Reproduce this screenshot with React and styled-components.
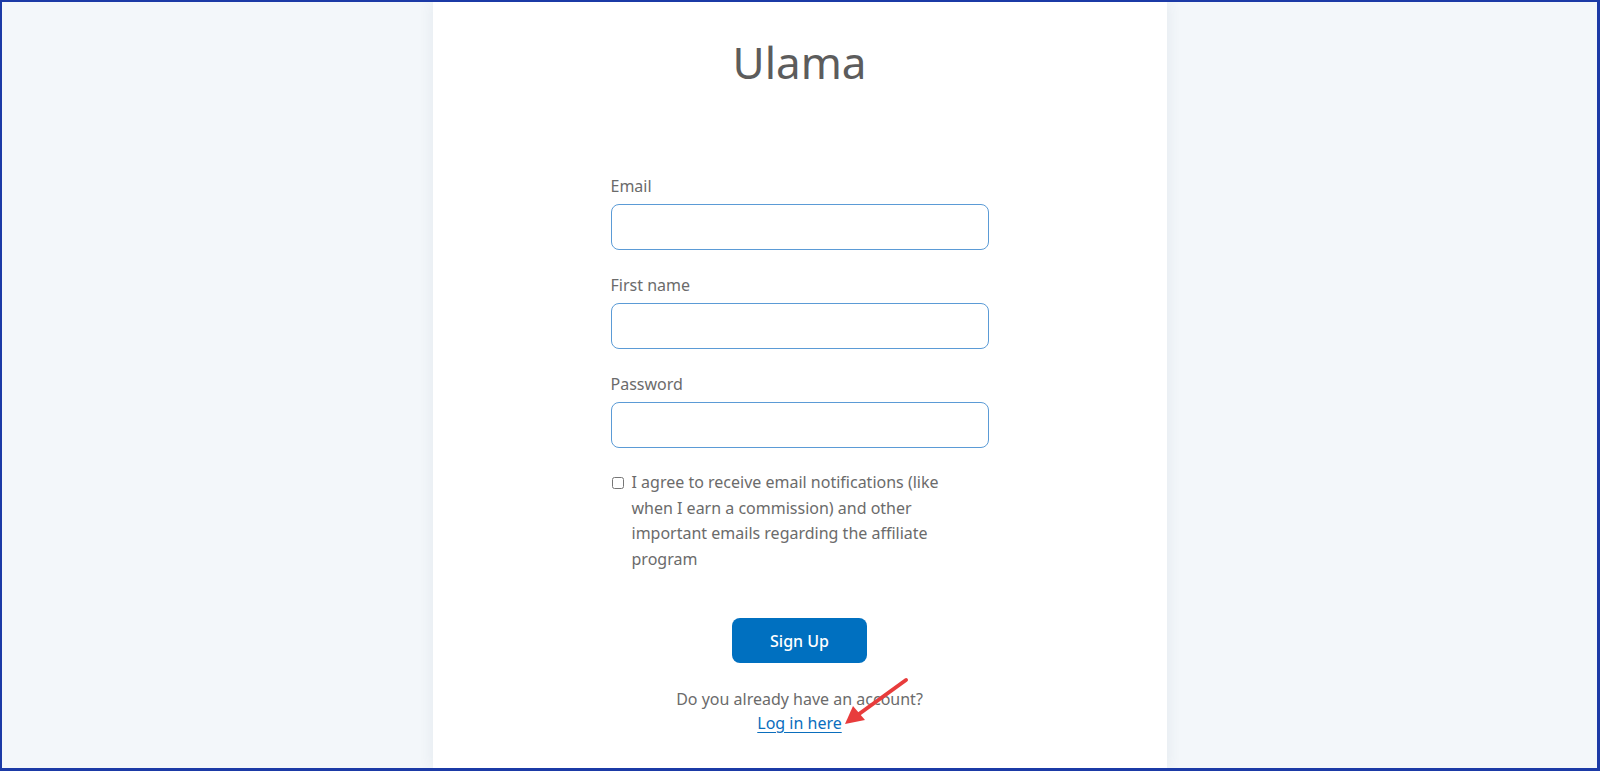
import React from "react";
import styled, { createGlobalStyle } from "styled-components";

const GlobalStyle = createGlobalStyle`
    html, body {
        margin: 0;
        padding: 0;
        height: 100%;
    }
    body {
        font-family: "Noto Sans", "Open Sans", sans-serif;
        color: #666666;
    }
    * {
        box-sizing: border-box;
    }
`;

const Frame = styled.div`
    height: 771px;
    border-style: solid;
    border-color: #1b3aa6;
    border-width: 2px 3px 3px 2px;
    background: #f3f7fa;
    display: flex;
    justify-content: center;
    overflow: hidden;
`;

const Card = styled.main`
    position: relative;
    width: 734px;
    background: #ffffff;
    box-shadow: 0 0 14px rgba(60, 80, 110, 0.09);
    display: flex;
    flex-direction: column;
    align-items: center;
    padding-top: 29px;
`;

const Title = styled.h1`
    margin: 0;
    font-size: 44px;
    line-height: 62px;
    font-weight: 400;
    color: #5c5c5c;
`;

const Form = styled.form`
    width: 378px;
    margin-top: 82px;
    display: flex;
    flex-direction: column;
`;

const Field = styled.div`
    display: flex;
    flex-direction: column;
    margin-bottom: 24px;
`;

const Label = styled.label`
    font-size: 16px;
    line-height: 22px;
    margin-bottom: 7px;
    color: #6b6b6b;
`;

const Input = styled.input`
    height: 46px;
    border: 1px solid #5b9bd6;
    border-radius: 8px;
    padding: 0 12px;
    font: inherit;
    outline: none;
    background: #ffffff;
`;

const Agree = styled.label`
    display: flex;
    align-items: flex-start;
    gap: 8px;
    margin-top: -2px;
    font-size: 16px;
    line-height: 25.5px;
    color: #6b6b6b;
`;

const AgreeText = styled.span`
    max-width: 340px;
`;

const Check = styled.input`
    margin: 7px 0 0 1px;
    width: 12px;
    height: 12px;
    flex-shrink: 0;
`;

const Button = styled.button`
    align-self: center;
    margin-top: 46px;
    width: 135px;
    height: 45px;
    border: none;
    border-radius: 8px;
    background: #0070c0;
    color: #ffffff;
    font-family: inherit;
    font-size: 16px;
    font-weight: 500;
    cursor: pointer;
`;

const Footer = styled.div`
    margin-top: 24px;
    text-align: center;
    font-size: 16px;
    line-height: 24px;
    color: #6b6b6b;
`;

const Link = styled.a`
    color: #0a6ebd;
    text-decoration: underline;
    text-underline-offset: 3px;
`;

const Arrow = styled.svg`
    position: absolute;
    left: 410px;
    top: 670px;
    pointer-events: none;
`;

const App = () => {
    return (
        <>
            <GlobalStyle />
            <Frame>
                <Card>
                    <Title>Ulama</Title>
                    <Form onSubmit={(e) => e.preventDefault()}>
                        <Field>
                            <Label htmlFor="email">Email</Label>
                            <Input id="email" type="email" />
                        </Field>
                        <Field>
                            <Label htmlFor="first">First name</Label>
                            <Input id="first" type="text" />
                        </Field>
                        <Field>
                            <Label htmlFor="password">Password</Label>
                            <Input id="password" type="password" />
                        </Field>
                        <Agree>
                            <Check type="checkbox" />
                            <AgreeText>
                                I agree to receive email notifications (like
                                when I earn a commission) and other important
                                emails regarding the affiliate program
                            </AgreeText>
                        </Agree>
                        <Button type="submit">Sign Up</Button>
                    </Form>
                    <Footer>
                        Do you already have an account?
                        <br />
                        <Link href="#">Log in here</Link>
                    </Footer>
                    <Arrow width="70" height="60" viewBox="0 0 70 60">
                        <line
                            x1="63"
                            y1="8"
                            x2="16"
                            y2="42"
                            stroke="#e83c3c"
                            strokeWidth="4"
                            strokeLinecap="round"
                        />
                        <polygon points="2,52 10,34 22,48" fill="#e83c3c" />
                    </Arrow>
                </Card>
            </Frame>
        </>
    );
};

export default App;
